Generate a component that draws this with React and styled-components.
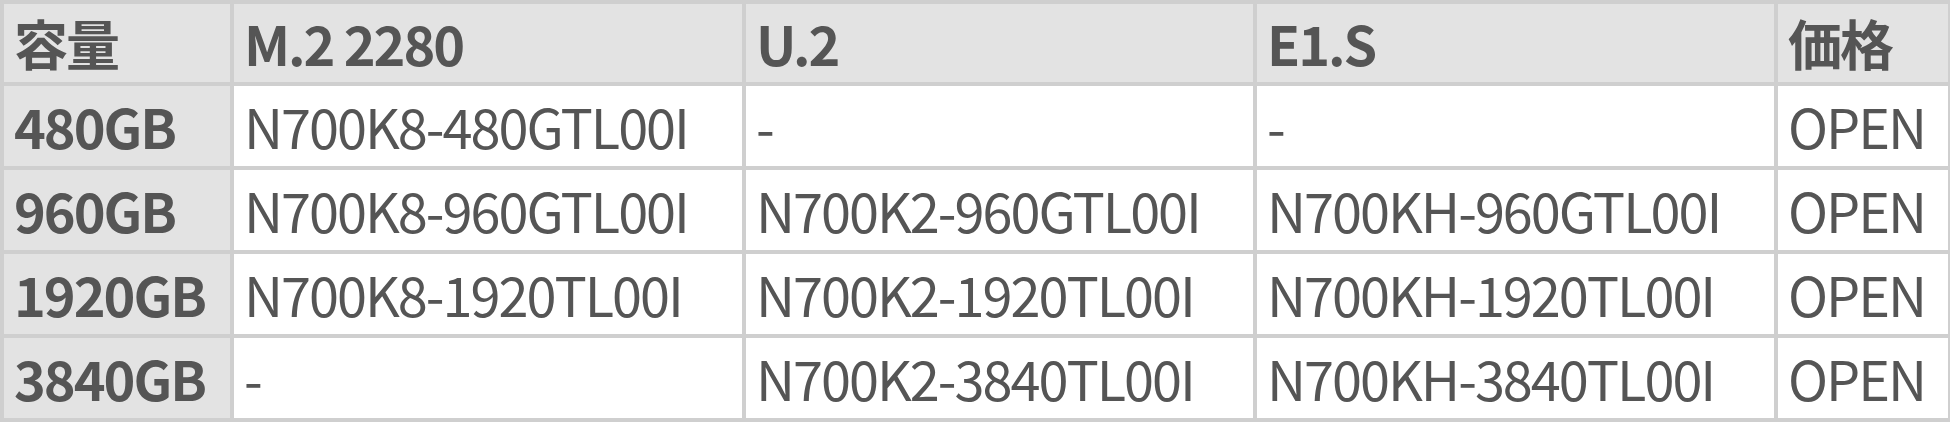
import React from 'react';
import styled, { createGlobalStyle } from 'styled-components';

const rows = [
  { size: '480GB', m2: 'N700K8-480GTL00I', u2: '-', e1s: '-', price: 'OPEN' },
  { size: '960GB', m2: 'N700K8-960GTL00I', u2: 'N700K2-960GTL00I', e1s: 'N700KH-960GTL00I', price: 'OPEN' },
  { size: '1920GB', m2: 'N700K8-1920TL00I', u2: 'N700K2-1920TL00I', e1s: 'N700KH-1920TL00I', price: 'OPEN' },
  { size: '3840GB', m2: '-', u2: 'N700K2-3840TL00I', e1s: 'N700KH-3840TL00I', price: 'OPEN' },
];

const colWidths = [230, 512, 511, 521, 174];

const App = () => {
  return (
    <>
      <GlobalStyle />
      <Table>
        <colgroup>
          {colWidths.map((w, i) => (
            <col key={i} style={{ width: w }} />
          ))}
        </colgroup>
        <thead>
          <HeadRow>
            <Head>容量</Head>
            <Head>M.2 2280</Head>
            <Head>U.2</Head>
            <Head>E1.S</Head>
            <Head>価格</Head>
          </HeadRow>
        </thead>
        <tbody>
          {rows.map(row => (
            <Row key={row.size}>
              <Head>{row.size}</Head>
              <Cell>{row.m2}</Cell>
              <Cell>{row.u2}</Cell>
              <Cell>{row.e1s}</Cell>
              <Cell>{row.price}</Cell>
            </Row>
          ))}
        </tbody>
      </Table>
    </>
  );
};

const GlobalStyle = createGlobalStyle`
  body {
    margin: 0;
    background: #ffffff;
    font-family: "Noto Sans CJK JP", "Noto Sans", sans-serif;
  }
`;

const Table = styled.table`
  border-collapse: collapse;
  table-layout: fixed;
  width: 1948px;
  border: 4px solid #cfcfcf;
  color: #555555;
  font-size: 54px;
  letter-spacing: -2px;
`;

const HeadRow = styled.tr`
  height: 82px;
`;

const Row = styled.tr`
  height: 84px;
`;

const Head = styled.th`
  background: #e3e3e3;
  border: 4px solid #cfcfcf;
  padding: 0 10px;
  text-align: left;
  font-weight: 700;
  line-height: 1;
  white-space: nowrap;
`;

const Cell = styled.td`
  background: #ffffff;
  border: 4px solid #cfcfcf;
  padding: 0 10px;
  font-weight: 400;
  line-height: 1;
  white-space: nowrap;
`;

export default App;
